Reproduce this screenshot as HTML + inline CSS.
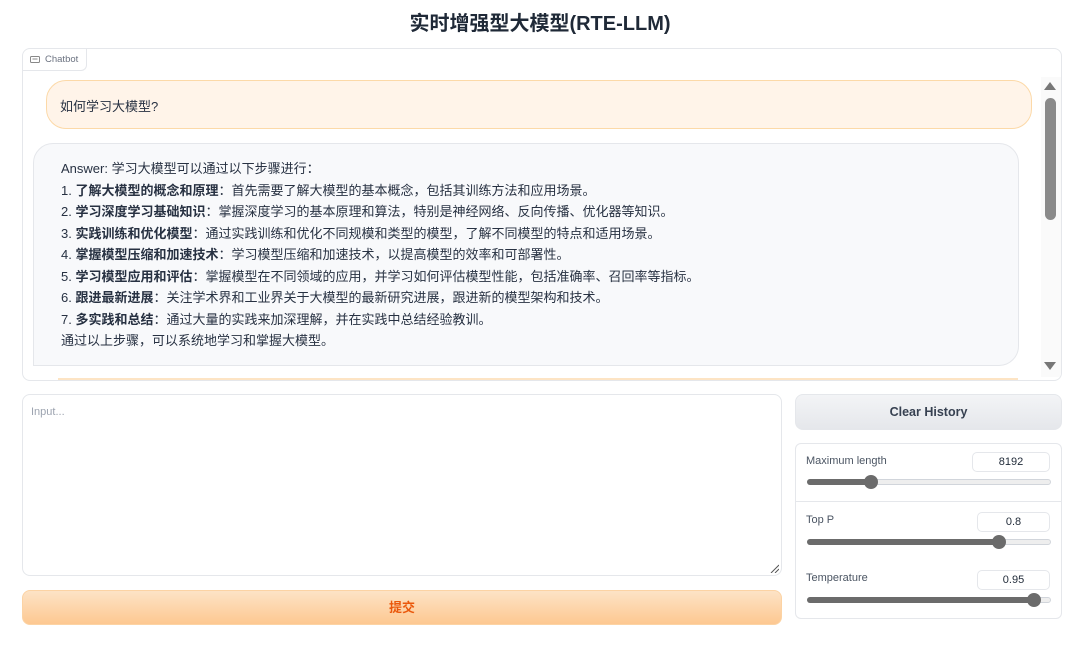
<!DOCTYPE html>
<html><head><meta charset="utf-8"><style>
*{box-sizing:border-box;margin:0;padding:0}
body{width:1080px;height:651px;background:#fff;font-family:"Liberation Sans","Noto Sans CJK SC",sans-serif;color:#1f2937;position:relative;overflow:hidden}
h1{position:absolute;top:7px;left:0;width:1080px;text-align:center;font-size:20px;font-weight:bold;color:#1f2937}
.chat{position:absolute;left:22px;top:48px;width:1040px;height:333px;border:1px solid #e5e7eb;border-radius:8px;overflow:hidden}
.lbl{position:absolute;left:0;top:0;height:22px;width:64px;border-right:1px solid #e5e7eb;border-bottom:1px solid #e5e7eb;border-radius:0 0 6px 0;font-size:9.5px;color:#6b7280;padding:5px 0 0 22px}
.lbl svg{position:absolute;left:7px;top:7px}
.user{position:absolute;left:23px;top:31px;width:986px;height:49px;background:#fff4e9;border:1px solid #fcd9a8;border-radius:20px;font-size:13px;padding:15px 0 0 13px;color:#273142}
.bot{position:absolute;left:10px;top:94px;width:986px;height:223px;background:#f8f9fb;border:1px solid #e5e7eb;border-radius:20px 20px 20px 0;font-size:13px;padding:14px 0 0 27px;line-height:21.5px;color:#273142}
.bot b{font-weight:bold}
.orl{position:absolute;left:35px;top:329px;width:960px;height:2px;background:#fde4c4}
.sb{position:absolute;right:0;top:28px;width:20px;height:300px;background:#fafafa}
.thumb{position:absolute;left:1045px;top:98px;width:11px;height:122px;background:#8a8a8a;border-radius:6px}
.inp{position:absolute;left:22px;top:394px;width:760px;height:182px;border:1px solid #e5e7eb;border-radius:8px;font-size:11px;color:#9ca3af;padding:11px 8px}
.sub{position:absolute;left:22px;top:590px;width:760px;height:35px;border-radius:8px;background:linear-gradient(#fde3c6,#fdc891);border:1px solid #fcd3a4;color:#ea580c;font-size:13px;text-align:center;line-height:33px;font-weight:bold}
.clr{position:absolute;left:795px;top:394px;width:267px;height:36px;border-radius:8px;background:linear-gradient(#f3f4f6,#e5e7eb);border:1px solid #e5e7eb;text-align:center;line-height:34px;font-size:12.5px;font-weight:bold;color:#374151}
.panel{position:absolute;left:795px;top:443px;width:267px;height:176px;border:1px solid #e5e7eb;border-radius:6px}
.row{position:absolute;left:0;width:265px}
.row .t{position:absolute;left:10px;font-size:11px;color:#4b5563}
.row .n{position:absolute;right:11px;height:20px;border:1px solid #e5e7eb;border-radius:5px;font-size:11px;text-align:center;line-height:18px;color:#1f2937}
.tr{position:absolute;left:11px;width:244px;height:6px;border:1px solid #d1d5db;border-radius:3px;background:#eee}
.fl{position:absolute;left:-1px;top:-1px;height:6px;background:#6b6b6b;border-radius:3px}
.kn{position:absolute;top:-5px;width:14px;height:14px;border-radius:50%;background:#6b6b6b}
</style></head><body>
<h1>实时增强型大模型(RTE-LLM)</h1>
<div class="chat">
<div class="lbl"><svg width="10" height="8" viewBox="0 0 10 8"><rect x="0.5" y="0.5" width="9" height="6" rx="1" fill="none" stroke="#888" stroke-width="1"/><line x1="2.5" y1="3" x2="7.5" y2="3" stroke="#888"/></svg>Chatbot</div>
<div class="user">如何学习大模型?</div>
<div class="bot">Answer: 学习大模型可以通过以下步骤进行：<br>1. <b>了解大模型的概念和原理</b>：首先需要了解大模型的基本概念，包括其训练方法和应用场景。<br>2. <b>学习深度学习基础知识</b>：掌握深度学习的基本原理和算法，特别是神经网络、反向传播、优化器等知识。<br>3. <b>实践训练和优化模型</b>：通过实践训练和优化不同规模和类型的模型，了解不同模型的特点和适用场景。<br>4. <b>掌握模型压缩和加速技术</b>：学习模型压缩和加速技术，以提高模型的效率和可部署性。<br>5. <b>学习模型应用和评估</b>：掌握模型在不同领域的应用，并学习如何评估模型性能，包括准确率、召回率等指标。<br>6. <b>跟进最新进展</b>：关注学术界和工业界关于大模型的最新研究进展，跟进新的模型架构和技术。<br>7. <b>多实践和总结</b>：通过大量的实践来加深理解，并在实践中总结经验教训。<br>通过以上步骤，可以系统地学习和掌握大模型。</div>
<div class="orl"></div>
<div class="sb"><svg style="position:absolute;left:3px;top:5px" width="12" height="8"><polygon points="6,0 12,8 0,8" fill="#777"/></svg><svg style="position:absolute;left:3px;top:285px" width="12" height="8"><polygon points="0,0 12,0 6,8" fill="#777"/></svg></div>
</div>
<div class="thumb"></div>
<div class="inp">Input...<svg style="position:absolute;right:2px;bottom:2px" width="9" height="9"><line x1="1" y1="9" x2="9" y2="1" stroke="#555"/><line x1="5" y1="9" x2="9" y2="5" stroke="#555"/></svg></div>
<div class="sub">提交</div>
<div class="clr">Clear History</div>
<div class="panel">
<div class="row" style="top:0;height:58px;border-bottom:1px solid #e5e7eb"><span class="t" style="top:11px">Maximum length</span><span class="n" style="top:8px;width:78px">8192</span><div class="tr" style="top:35px"><div class="fl" style="width:64px"></div><div class="kn" style="left:56px"></div></div></div>
<div class="row" style="top:58px"><span class="t" style="top:12px">Top P</span><span class="n" style="top:10px;width:73px">0.8</span><div class="tr" style="top:37px"><div class="fl" style="width:192px"></div><div class="kn" style="left:184px"></div></div></div>
<div class="row" style="top:116px"><span class="t" style="top:12px">Temperature</span><span class="n" style="top:10px;width:73px">0.95</span><div class="tr" style="top:37px"><div class="fl" style="width:227px"></div><div class="kn" style="left:219px"></div></div></div>
</div>
</body></html>
